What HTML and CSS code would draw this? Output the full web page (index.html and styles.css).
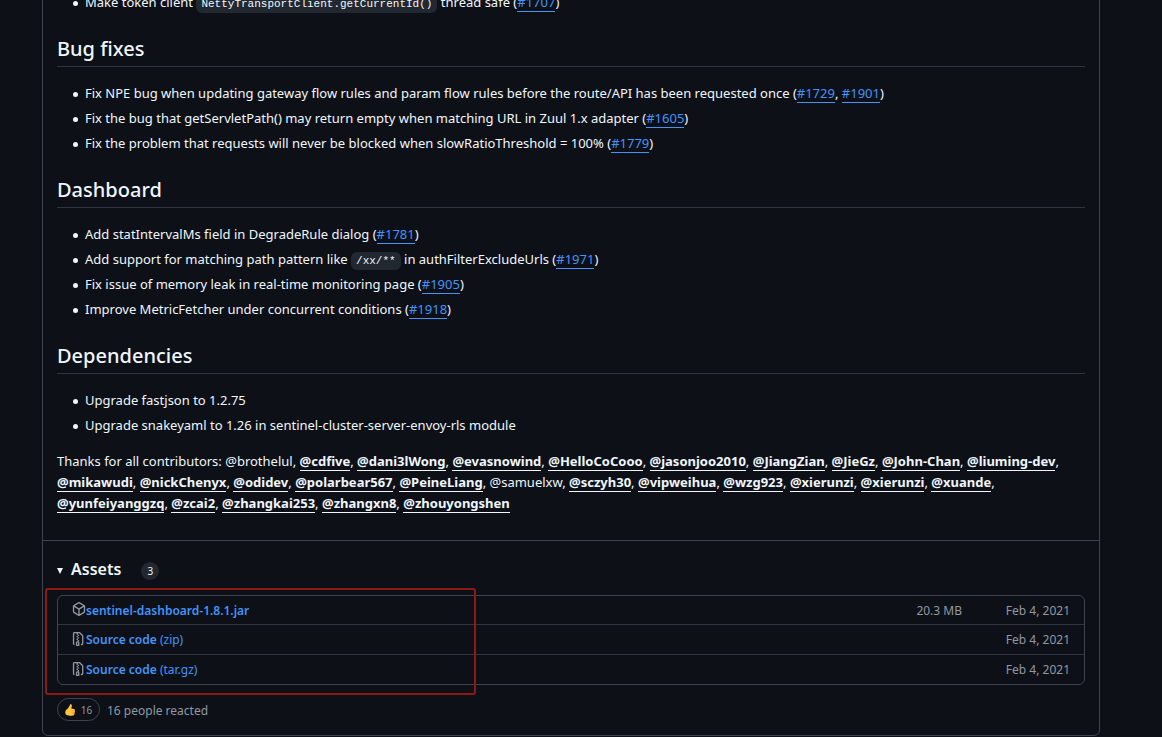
FILE: index.html
```
<!DOCTYPE html>
<html lang="en">
<head>
    <meta charset="UTF-8">
    <meta name="viewport" content="width=device-width, initial-scale=1.0">
    <title>Release notes</title>
    <link rel="stylesheet" href="styles.css">
</head>
<body>
    <main class="release">
        <section class="notes">
            <ul>
                <li>Make token client <code>NettyTransportClient.getCurrentId()</code> thread safe (<a href="#1707">#1707</a>)</li>
            </ul>
            <h2>Bug fixes</h2>
            <ul>
                <li>Fix NPE bug when updating gateway flow rules and param flow rules before the route/API has been requested once (<a href="#1729">#1729</a>, <a href="#1901">#1901</a>)</li>
                <li>Fix the bug that getServletPath() may return empty when matching URL in Zuul 1.x adapter (<a href="#1605">#1605</a>)</li>
                <li>Fix the problem that requests will never be blocked when slowRatioThreshold = 100% (<a href="#1779">#1779</a>)</li>
            </ul>
            <h2>Dashboard</h2>
            <ul>
                <li>Add statIntervalMs field in DegradeRule dialog (<a href="#1781">#1781</a>)</li>
                <li>Add support for matching path pattern like <code>/xx/**</code> in authFilterExcludeUrls (<a href="#1971">#1971</a>)</li>
                <li>Fix issue of memory leak in real-time monitoring page (<a href="#1905">#1905</a>)</li>
                <li>Improve MetricFetcher under concurrent conditions (<a href="#1918">#1918</a>)</li>
            </ul>
            <h2>Dependencies</h2>
            <ul>
                <li>Upgrade fastjson to 1.2.75</li>
                <li>Upgrade snakeyaml to 1.26 in sentinel-cluster-server-envoy-rls module</li>
            </ul>
            <p class="thanks">
                Thanks for all contributors: @brothelul, <a href="#">@cdfive</a>, <a href="#">@dani3lWong</a>, <a href="#">@evasnowind</a>, <a href="#">@HelloCoCooo</a>, <a href="#">@jasonjoo2010</a>, <a href="#">@JiangZian</a>, <a href="#">@JieGz</a>, <a href="#">@John-Chan</a>, <a href="#">@liuming-dev</a>,
                <a href="#">@mikawudi</a>, <a href="#">@nickChenyx</a>, <a href="#">@odidev</a>, <a href="#">@polarbear567</a>, <a href="#">@PeineLiang</a>, @samuelxw, <a href="#">@sczyh30</a>, <a href="#">@vipweihua</a>, <a href="#">@wzg923</a>, <a href="#">@xierunzi</a>, <a href="#">@xierunzi</a>, <a href="#">@xuande</a>,
                <a href="#">@yunfeiyanggzq</a>, <a href="#">@zcai2</a>, <a href="#">@zhangkai253</a>, <a href="#">@zhangxn8</a>, <a href="#">@zhouyongshen</a>
            </p>
        </section>

        <section class="assets">
            <details open>
                <summary>
                    <svg class="arrow" viewBox="0 0 6 6"><path d="M0 0h6L3 6z"/></svg>
                    <span class="title">Assets</span>
                    <span class="counter">3</span>
                </summary>
                <div class="files">
                    <ul>
                        <li>
                            <svg class="icon" viewBox="0 0 16 16"><path d="m8.878.392 5.25 3.045c.54.314.872.89.872 1.514v6.098a1.75 1.75 0 0 1-.872 1.514l-5.25 3.045a1.75 1.75 0 0 1-1.756 0l-5.25-3.045A1.75 1.75 0 0 1 1 11.049V4.951c0-.624.332-1.201.872-1.514L7.122.392a1.75 1.75 0 0 1 1.756 0ZM7.875 1.69l-4.63 2.685L8 7.133l4.755-2.758-4.63-2.685a.248.248 0 0 0-.25 0ZM2.5 5.677v5.372c0 .09.047.171.125.216l4.625 2.683V8.432Zm6.25 8.271 4.625-2.683a.25.25 0 0 0 .125-.216V5.677L8.75 8.432Z"/></svg>
                            <a href="#jar"><b>sentinel-dashboard-1.8.1.jar</b></a>
                            <span class="size">20.3 MB</span>
                            <span class="date">Feb 4, 2021</span>
                        </li>
                        <li>
                            <svg class="icon" viewBox="1 0 16 16"><path d="M3.5 1.75v11.5c0 .09.048.173.126.217a.75.75 0 0 1-.752 1.298A1.748 1.748 0 0 1 2 13.25V1.75C2 .784 2.784 0 3.75 0h5.586c.464 0 .909.185 1.237.513l2.914 2.914c.329.328.513.773.513 1.237v8.586A1.75 1.75 0 0 1 12.25 15h-.5a.75.75 0 0 1 0-1.5h.5a.25.25 0 0 0 .25-.25V4.664a.25.25 0 0 0-.073-.177L9.513 1.573a.25.25 0 0 0-.177-.073H7.25a.75.75 0 0 1 0 1.5h-.5a.75.75 0 0 1 0-1.5h-3a.25.25 0 0 0-.25.25Zm3.75 8.75h.5c.966 0 1.75.784 1.75 1.75v3a.75.75 0 0 1-.75.75h-2.5a.75.75 0 0 1-.75-.75v-3c0-.966.784-1.75 1.75-1.75ZM6 5.25a.75.75 0 0 1 .75-.75h.5a.75.75 0 0 1 0 1.5h-.5A.75.75 0 0 1 6 5.25Zm.75 2.25h.5a.75.75 0 0 1 0 1.5h-.5a.75.75 0 0 1 0-1.5Zm1.25-4.5h.5a.75.75 0 0 1 0 1.5H8a.75.75 0 0 1 0-1.5Zm0 3h.5a.75.75 0 0 1 0 1.5H8A.75.75 0 0 1 8 6Zm0 3h.5a.75.75 0 0 1 0 1.5H8A.75.75 0 0 1 8 9Zm-1 3.25v2.25h1v-2.25a.25.25 0 0 0-.25-.25h-.5a.25.25 0 0 0-.25.25Z"/></svg>
                            <a href="#zip"><b>Source code</b> (zip)</a>
                            <span class="date">Feb 4, 2021</span>
                        </li>
                        <li>
                            <svg class="icon" viewBox="1 0 16 16"><path d="M3.5 1.75v11.5c0 .09.048.173.126.217a.75.75 0 0 1-.752 1.298A1.748 1.748 0 0 1 2 13.25V1.75C2 .784 2.784 0 3.75 0h5.586c.464 0 .909.185 1.237.513l2.914 2.914c.329.328.513.773.513 1.237v8.586A1.75 1.75 0 0 1 12.25 15h-.5a.75.75 0 0 1 0-1.5h.5a.25.25 0 0 0 .25-.25V4.664a.25.25 0 0 0-.073-.177L9.513 1.573a.25.25 0 0 0-.177-.073H7.25a.75.75 0 0 1 0 1.5h-.5a.75.75 0 0 1 0-1.5h-3a.25.25 0 0 0-.25.25Zm3.75 8.75h.5c.966 0 1.75.784 1.75 1.75v3a.75.75 0 0 1-.75.75h-2.5a.75.75 0 0 1-.75-.75v-3c0-.966.784-1.75 1.75-1.75ZM6 5.25a.75.75 0 0 1 .75-.75h.5a.75.75 0 0 1 0 1.5h-.5A.75.75 0 0 1 6 5.25Zm.75 2.25h.5a.75.75 0 0 1 0 1.5h-.5a.75.75 0 0 1 0-1.5Zm1.25-4.5h.5a.75.75 0 0 1 0 1.5H8a.75.75 0 0 1 0-1.5Zm0 3h.5a.75.75 0 0 1 0 1.5H8A.75.75 0 0 1 8 6Zm0 3h.5a.75.75 0 0 1 0 1.5H8A.75.75 0 0 1 8 9Zm-1 3.25v2.25h1v-2.25a.25.25 0 0 0-.25-.25h-.5a.25.25 0 0 0-.25.25Z"/></svg>
                            <a href="#targz"><b>Source code</b> (tar.gz)</a>
                            <span class="date">Feb 4, 2021</span>
                        </li>
                    </ul>
                    <div class="highlight"></div>
                </div>
            </details>
            <div class="reactions">
                <button type="button">
                    <svg class="thumb" viewBox="0 0 10 12"><path fill="#ffc83d" d="M5 .6C5.300 0 6.700 0 6.800 1.200 6.900 2.600 6.500 3.600 6.300 4.600L9 5c1 .2 1.200 1.200.6 1.700.5.500.5 1.300-.1 1.700.4.500.2 1.200-.3 1.500.2.700-.2 1.400-1 1.500-2 .4-4.200.5-5.700-.1C.8 10.700.1 9.600.3 7.900.5 6 1.600 5.400 2.800 4.400 4 3.300 4.500 2 5 .6z"/><path fill="none" stroke="#e8892b" stroke-width=".6" d="M6.500 6.700h3M6.500 8.400h3M6.500 9.900h2.700M6.300 4.600 5.500 6"/></svg>
                    <span>16</span>
                </button>
                <span class="people">16 people reacted</span>
            </div>
        </section>
    </main>
</body>
</html>
```
FILE: styles.css
```
* {
    box-sizing: border-box;
}
body {
    font-family: "Segoe UI", "Noto Sans", sans-serif;
    font-size: 13px;
    line-height: 21px;
    color: #f0f6fc;
    background-color: #0d1117;
    margin: 0;
}
ul {
    list-style: none;
    padding: 0;
    margin: 0;
}
a {
    color: #4493f8;
}
.release {
    margin: -9px 62px 0 42px;
    border: 1px solid #3d444d;
    border-radius: 6px;
}
.notes {
    padding: 0 14px 26px;
}
.notes ul {
    padding-left: 28px;
}
.notes li + li {
    margin-top: 4px;
}
.notes li::before {
    content: "";
    display: inline-block;
    width: 5px;
    height: 5px;
    margin: 0 7px 0 -12px;
    vertical-align: middle;
    background-color: #f0f6fc;
    border-radius: 50%;
}
.notes a {
    text-decoration: none;
    border-bottom: 1px solid;
}
.notes h2 {
    margin: 22px 0 16px;
    padding-bottom: 4px;
    font-size: 20px;
    font-weight: 500;
    line-height: 27px;
    border-bottom: 1px solid #2f353d;
}
code {
    padding: 3px 5px;
    font-family: "Liberation Mono", monospace;
    font-size: 11px;
    line-height: 12px;
    background-color: #212830;
    border-radius: 6px;
}
.thanks {
    margin: 15px 0 0;
}
.thanks a {
    color: #f0f6fc;
    font-weight: 700;
}
.assets {
    padding: 16px 14px 14px;
    border-top: 1px solid #3d444d;
}
summary {
    display: flex;
    align-items: center;
    height: 24px;
    margin-bottom: 14px;
    cursor: pointer;
}
.arrow {
    width: 6px;
    height: 6px;
    margin: 3px 8px 0 0;
    fill: #f0f6fc;
}
.title {
    font-size: 16px;
    font-weight: 600;
}
.counter {
    width: 18px;
    margin: 3px 0 0 20px;
    font-size: 10px;
    line-height: 18px;
    text-align: center;
    background-color: #212830;
    border-radius: 9px;
}
.files {
    position: relative;
}
.files ul {
    border: 1px solid #3d444d;
    border-radius: 6px;
    font-size: 12px;
}
.files li {
    display: flex;
    align-items: center;
    height: 28px;
    padding: 0 14px;
    color: #9198a1;
}
.files li + li {
    height: 30px;
    border-top: 1px solid #2f353d;
}
.files a {
    flex: 1;
    text-decoration: none;
}
.files b {
    font-weight: 600;
}
.icon {
    width: 14px;
    height: 14px;
    margin-bottom: 2px;
    fill: #9198a1;
}
.date {
    width: 108px;
    text-align: right;
}
.highlight {
    position: absolute;
    top: -7px;
    left: -12px;
    width: 431px;
    height: 107px;
    border: 2px solid #8e1a15;
    border-radius: 3px;
    pointer-events: none;
}
.reactions {
    display: flex;
    align-items: center;
    gap: 7px;
    margin-top: 13px;
    font-size: 12px;
    color: #9198a1;
}
.people {
    padding-top: 2px;
}
.reactions button {
    display: flex;
    align-items: center;
    justify-content: center;
    gap: 6px;
    width: 43px;
    height: 23px;
    padding: 1px 0 0;
    font-family: inherit;
    font-size: 10px;
    color: #9198a1;
    background: none;
    border: 1px solid #3d444d;
    border-radius: 12px;
}
.thumb {
    width: 10px;
    height: 12px;
}
```
